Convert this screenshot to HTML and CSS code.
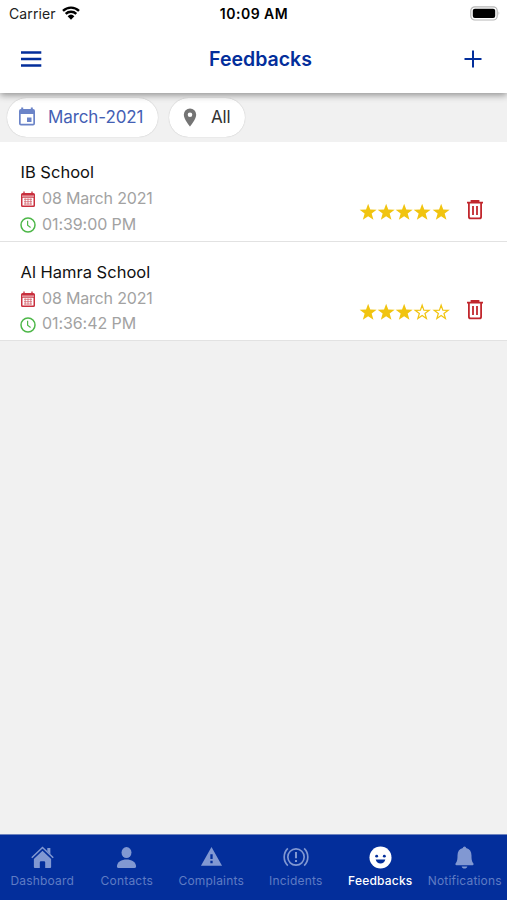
FILE: index.html
```html
<!DOCTYPE html>
<html lang="en">
<head>
<meta charset="utf-8">
<title>Feedbacks</title>
<link rel="stylesheet" href="styles.css">
</head>
<body>
<svg class="defs" width="0" height="0" aria-hidden="true">
  <symbol id="star" viewBox="0 0 18 18"><path d="M9 .8 11.100 6.500 17.500 6.800 12.500 10.600 14.300 16.800 9 13.200 3.700 16.800 5.500 10.600.5 6.800 6.900 6.500Z" fill="#f1c40f"/></symbol>
  <symbol id="star-empty" viewBox="0 0 18 18"><path d="M9 2.200 10.700 7.100 16 7.300 11.800 10.400 13.300 15.500 9 12.500 4.700 15.500 6.200 10.400 2 7.300 7.300 7.100Z" fill="none" stroke="#f1c40f" stroke-width="1.200"/></symbol>
  <symbol id="calendar" viewBox="0 0 16 17"><path d="M2.600 2h10.800a1.600 1.600 0 0 1 1.600 1.600v10.900a1.600 1.600 0 0 1-1.600 1.600H2.600A1.600 1.600 0 0 1 1 14.500V3.600A1.600 1.600 0 0 1 2.600 2Z" fill="#c9303e"/><path d="M4 .6v3M12 .6v3" stroke="#c9303e" stroke-width="1.300"/><path d="M2 5.100h12" stroke="#fff" stroke-width=".8"/><path d="M2.500 6.700h11v7.800h-11Z" fill="#fff"/><path d="M4 8.300h8M4 10.700h8M4 13h8M5.200 7.400v6.300M8 7.400v6.300M10.800 7.400v6.300" stroke="#c9303e" stroke-width=".8" opacity=".75"/></symbol>
  <symbol id="clock" viewBox="0 0 16 16"><circle cx="8" cy="8" r="7" fill="none" stroke="#4db748" stroke-width="1.500"/><path d="M7.600 3.700v4.600l3 2.200" fill="none" stroke="#4db748" stroke-width="1.200"/></symbol>
  <symbol id="trash" viewBox="0 0 18 20"><path d="M1 2.700h16M5.500 2.300V1h7v1.300M2.900 2.900v13.800a1.700 1.700 0 0 0 1.700 1.700h8.800a1.700 1.700 0 0 0 1.700-1.700V2.900M7 6v9M11 6v9" fill="none" stroke="#c1272d" stroke-width="1.800"/></symbol>
</svg>
<div class="app">
  <header class="header">
    <div class="status">
      <div class="carrier"><span>Carrier</span>
        <svg width="18" height="14" viewBox="0 0 18 14"><path d="M1 4.900a11.500 11.500 0 0 1 16 0M3.700 7.900a7.600 7.600 0 0 1 10.600 0" fill="none" stroke="#000" stroke-width="2.400"/><path d="M5.600 10.200a5 5 0 0 1 6.800 0L9 13.700Z"/></svg>
      </div>
      <div class="time">10:09 AM</div>
      <svg class="battery" width="31" height="15" viewBox="0 0 31 15"><rect x=".8" y=".8" width="26.400" height="13.200" rx="4" fill="#fff" stroke="#b6b6b6" stroke-width="1.200"/><rect x="2.800" y="2.800" width="22.400" height="9.200" rx="2"/><path d="M28.600 5.200q1.800 2.200 0 4.400Z" fill="#aaa"/></svg>
    </div>
    <div class="titlebar">
      <svg width="21" height="17" viewBox="0 0 21 17"><path d="M0 1.500h20.300M0 8h20.300M0 14.500h20.300" stroke="#032e9b" stroke-width="2.400"/></svg>
      <h1>Feedbacks</h1>
      <svg width="18" height="18" viewBox="0 0 18 18"><path d="M9 .5v17M.5 9h17" stroke="#032e9b" stroke-width="2"/></svg>
    </div>
  </header>
  <div class="filters">
    <button class="chip month">
      <svg width="18" height="20" viewBox="0 0 18 20"><path d="M3 2h12a2 2 0 0 1 2 2v12.500a2 2 0 0 1-2 2H3a2 2 0 0 1-2-2V4a2 2 0 0 1 2-2ZM2.700 7v9.800h12.600V7Z" fill="#6b84c8" fill-rule="evenodd"/><path d="M3.200.5h2V3h-2ZM12.800.5h2V3h-2ZM9 10.500h4.500V15H9Z" fill="#6b84c8"/></svg>
      <span>March-2021</span>
    </button>
    <button class="chip place">
      <svg width="14" height="19" viewBox="0 0 14 19"><path d="M7 .5A6.200 6.200 0 0 0 .8 6.700C.8 11.300 7 18.500 7 18.500S13.200 11.300 13.200 6.700A6.200 6.200 0 0 0 7 .5Zm0 3.900a2.300 2.300 0 1 1 0 4.600 2.300 2.300 0 0 1 0-4.600Z" fill="#747474" fill-rule="evenodd"/></svg>
      <span>All</span>
    </button>
  </div>
  <main>
    <article class="item">
      <div class="info">
        <h2>IB School</h2>
        <p class="date"><svg width="16" height="17"><use href="#calendar"/></svg><span>08 March 2021</span></p>
        <p class="hour"><svg width="16" height="16"><use href="#clock"/></svg><span>01:39:00 PM</span></p>
      </div>
      <div class="stars"><svg><use href="#star"/></svg><svg><use href="#star"/></svg><svg><use href="#star"/></svg><svg><use href="#star"/></svg><svg><use href="#star"/></svg></div>
      <svg class="trash" width="18" height="20"><use href="#trash"/></svg>
    </article>
    <article class="item">
      <div class="info">
        <h2>Al Hamra School</h2>
        <p class="date"><svg width="16" height="17"><use href="#calendar"/></svg><span>08 March 2021</span></p>
        <p class="hour"><svg width="16" height="16"><use href="#clock"/></svg><span>01:36:42 PM</span></p>
      </div>
      <div class="stars"><svg><use href="#star"/></svg><svg><use href="#star"/></svg><svg><use href="#star"/></svg><svg><use href="#star-empty"/></svg><svg><use href="#star-empty"/></svg></div>
      <svg class="trash" width="18" height="20"><use href="#trash"/></svg>
    </article>
  </main>
  <nav class="tabs">
    <a class="tab"><svg viewBox="0 0 24 24"><path d="M12 5 21 13.600V22a1 1 0 0 1-1 1h-5.200v-6a1.200 1.200 0 0 0-1.200-1.200h-3.200A1.200 1.200 0 0 0 9.200 17v6H4a1 1 0 0 1-1-1v-8.400Z"/><path d="M.8 12.200 12 1.500l11.200 10.700" fill="none" stroke="currentColor" stroke-width="1.600"/><path d="M17 2h3.200v6.500L17 5.500Z"/></svg><span>Dashboard</span></a>
    <a class="tab"><svg viewBox="0 0 24 24"><ellipse cx="12" cy="6.800" rx="5.200" ry="5.700"/><path d="M2 21.500c0-5 5-7.500 10-7.500s10 2.500 10 7.500c0 1-.6 1.500-1.500 1.500h-17c-.9 0-1.500-.5-1.500-1.500Z"/></svg><span>Contacts</span></a>
    <a class="tab"><svg viewBox="0 0 24 24"><path d="M12 1 23 20.500H1ZM10.800 8.500v5h2.400v-5ZM10.800 15.500v2.600h2.400v-2.600Z" fill-rule="evenodd"/></svg><span>Complaints</span></a>
    <a class="tab"><svg class="wide" viewBox="0 0 28 24"><g fill="none" stroke="currentColor" stroke-width="1.800"><circle cx="14" cy="11.500" r="8.800"/><path d="M5.200 2.200a13 13 0 0 0 0 18.600M22.800 2.200a13 13 0 0 1 0 18.600"/><path d="M14 6v6.800M14 14.700v2.200" stroke-width="2.200"/></g></svg><span>Incidents</span></a>
    <a class="tab active"><svg viewBox="0 0 24 24"><circle cx="12" cy="12" r="11.500"/><circle cx="8" cy="10.600" r="1.500" fill="#032e9b"/><circle cx="16" cy="10.600" r="1.500" fill="#032e9b"/><path d="M7 14h10c-.6 2.800-2.500 4.300-5 4.300S7.600 16.800 7 14Z" fill="#032e9b"/></svg><span>Feedbacks</span></a>
    <a class="tab"><svg viewBox="0 0 24 24"><path d="M12 .5a1.700 1.700 0 0 1 1.700 1.700c3.700.8 5.600 3.700 5.600 7.600 0 5 .7 6.500 1.900 8.200.7 1 .2 2-.8 2H3.600c-1 0-1.500-1-.8-2 1.200-1.700 1.900-3.200 1.900-8.200 0-3.900 1.900-6.800 5.600-7.600A1.700 1.700 0 0 1 12 .5ZM9 21.300h6c-.4 1.400-1.600 2.200-3 2.200s-2.600-.8-3-2.200Z"/></svg><span>Notifications</span></a>
  </nav>
</div>
</body>
</html>
```
FILE: styles.css
```css
* { box-sizing: border-box; }
body { margin: 0; font-family: Inter, "Liberation Sans", sans-serif; background: #f0f0f0; }
h1, h2, p { margin: 0; font-weight: 400; }
svg { display: block; flex: none; }
.defs { position: absolute; }
.app { height: 900px; display: flex; flex-direction: column; overflow: hidden; background: #f1f1f1; }
.header { height: 92.5px; flex: none; background: #fff; box-shadow: 0 2px 7px rgba(0, 0, 0, .42); position: relative; }
.status { height: 27px; display: grid; grid-template-columns: 1fr auto 1fr; align-items: center; padding: 0 6px 0 9px; }
.carrier { display: flex; align-items: center; gap: 6px; font-size: 14px; color: #222; letter-spacing: .1px; }
.carrier svg { margin-top: -2px; }
.time { font-size: 14px; font-weight: 600; letter-spacing: .5px; margin-right: 2px; }
.battery { justify-self: end; }
.titlebar { height: 64px; display: grid; grid-template-columns: 1fr auto 1fr; align-items: center; padding: 0 25px 0 21px; }
.titlebar > svg:last-child { justify-self: end; }
h1 { font-size: 19.5px; font-weight: 600; color: #032e9b; margin: 0 -8px 0 10px; }
.filters { height: 49.5px; flex: none; display: flex; padding: 5px 7px; gap: 11px; }
.chip { height: 39px; display: flex; align-items: center; border: 0; border-radius: 20px; padding: 0; background: #fff; font: 400 17px Inter, sans-serif; box-shadow: 0 0 1px rgba(0, 0, 0, .3); }
.month { width: 151px; padding-left: 11px; gap: 12px; color: #4460b4; letter-spacing: -.1px; }
.place { width: 76px; padding-left: 14px; gap: 14px; color: #333; letter-spacing: -.2px; }
.item { height: 99.5px; display: flex; background: #fff; border-bottom: 1px solid #e2e2e2; padding: 0 23px 0 20px; }
.info { flex: 1; padding-top: 18px; }
h2 { font-size: 16.5px; line-height: 24px; color: #111; padding-left: .5px; }
.info p { display: flex; align-items: center; gap: 6px; color: #a2a2a2; font-size: 16px; letter-spacing: -.18px; }
.info .date { height: 28px; }
.info .hour { height: 23px; letter-spacing: -.08px; }
.info p svg { margin-top: 3px; }
.stars { display: flex; padding-top: 61px; margin-right: 16px; }
.stars svg { width: 18.3px; height: 18px; }
.trash { margin-top: 58px; }
.tabs { margin-top: auto; height: 66px; flex: none; display: grid; grid-template-columns: repeat(6, 1fr); background: #032e9b; border-top: 1px solid #6d83be; }
.tab { display: flex; flex-direction: column; align-items: center; padding-top: 11px; color: #8198d2; font-size: 12px; line-height: 16px; letter-spacing: .2px; white-space: nowrap; }
.tab svg { width: 23px; height: 23px; fill: currentColor; }
.tab .wide { width: 26px; }
.tab span { margin-top: 4px; color: #5f7cc4; }
.tab.active, .tab.active span { color: #fff; font-weight: 500; }
```
